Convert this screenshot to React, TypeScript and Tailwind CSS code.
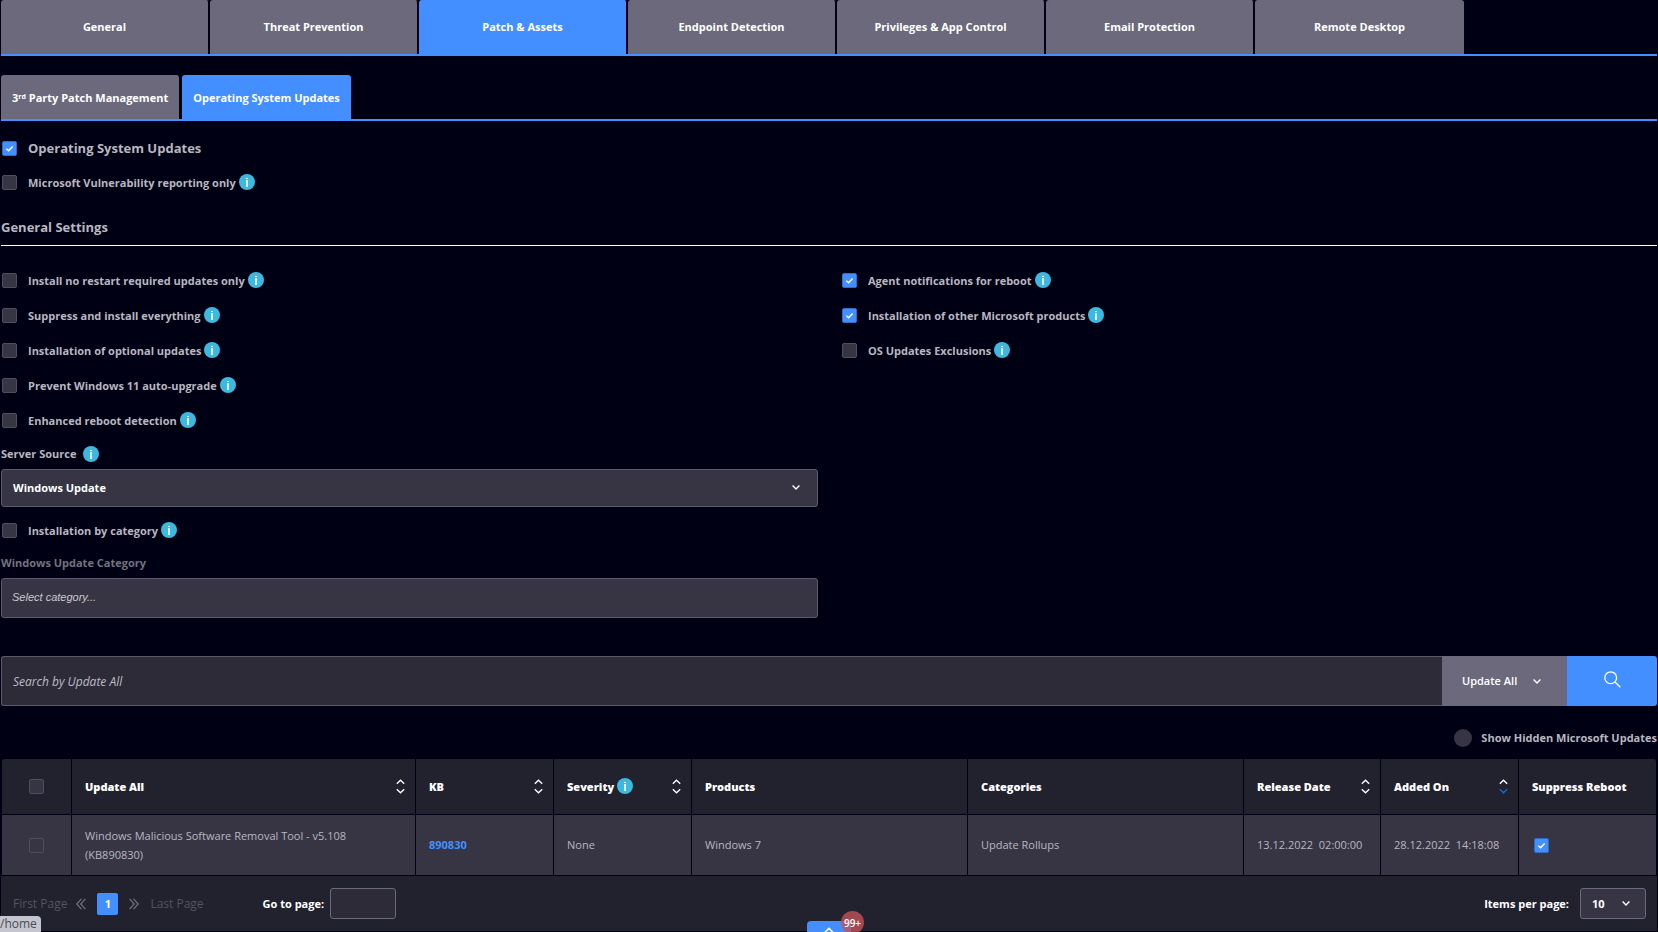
import React from 'react';
import clsx from 'clsx';

const InfoIcon = () => (
  <svg viewBox="0 0 16 16" className="mb-px h-4 w-4 shrink-0" aria-hidden="true">
    <circle cx="8" cy="8" r="8" fill="#3db8e0" />
    <rect x="7" y="4" width="2" height="1" fill="#fff" />
    <rect x="7" y="6" width="2" height="7" fill="#d6f0f9" />
  </svg>
);

const Chevron = ({ className }: { className?: string }) => (
  <svg viewBox="0 0 8 5" className={clsx('h-[5px] w-2', className)} fill="none" stroke="#fff" strokeWidth="1.4" aria-hidden="true">
    <path d="M0.6 0.6 L4 4 L7.4 0.6" />
  </svg>
);

const SortButton = ({ label, desc }: { label: string; desc?: boolean }) => (
  <button type="button" aria-label={`Sort by ${label}`}>
    <svg viewBox="0 0 9 15" className="h-[15px] w-[9px]" fill="none" strokeWidth="1.3">
      <path d="M0.8 4.8 L4.5 1.2 L8.2 4.8" stroke="#fff" />
      <path d="M0.8 10.2 L4.5 13.8 L8.2 10.2" stroke={desc ? '#0f6de0' : '#fff'} />
    </svg>
  </button>
);

interface CheckProps {
  id: string;
  checked?: boolean;
  label?: string;
}

const Check: React.FC<CheckProps> = ({ id, checked, label }) => (
  <span className="relative inline-flex shrink-0">
    <input
      id={id}
      type="checkbox"
      defaultChecked={checked}
      aria-label={label}
      className="peer h-[15px] w-[15px] appearance-none rounded-[2px] border border-[#504e5e] bg-[#373544] checked:border-[#2f6cc4] checked:bg-[#448fff]"
    />
    <svg viewBox="0 0 15 15" className="pointer-events-none absolute inset-0 hidden h-[15px] w-[15px] peer-checked:block" fill="none" stroke="#fff" strokeWidth="1.5">
      <path d="M4.4 7.8 L6.6 9.8 L10.6 5.4" />
    </svg>
  </span>
);

interface OptionProps extends CheckProps {
  text: string;
}

const Option: React.FC<OptionProps> = ({ id, text, checked }) => (
  <div className="flex h-[35px] items-center pl-px">
    <Check id={id} checked={checked} />
    <label htmlFor={id} className="mr-[3px] pl-[11px]">{text}</label>
    <InfoIcon />
  </div>
);

const tabs = [
  'General',
  'Threat Prevention',
  'Patch & Assets',
  'Endpoint Detection',
  'Privileges & App Control',
  'Email Protection',
  'Remote Desktop',
];

const columns = [
  { name: 'Update All', sort: true },
  { name: 'KB', sort: true },
  { name: 'Severity', sort: true, info: true },
  { name: 'Products' },
  { name: 'Categories' },
  { name: 'Release Date', sort: true },
  { name: 'Added On', sort: true, desc: true },
  { name: 'Suppress Reboot' },
];

const UpdatesTable = () => (
  <table className="w-full table-fixed border-separate border-spacing-px text-left">
    <colgroup>
      <col className="w-[69px]" />
      <col />
      <col className="w-[137px]" />
      <col className="w-[137px]" />
      <col className="w-[275px]" />
      <col className="w-[275px]" />
      <col className="w-[136px]" />
      <col className="w-[137px]" />
      <col className="w-[137px]" />
    </colgroup>
    <thead>
      <tr className="h-[55px] text-white">
        <th className="rounded-tl-[3px] bg-[#22212e] text-center">
          <span className="flex justify-center"><Check id="all" label="Select all updates" /></span>
        </th>
        {columns.map((col) => (
          <th key={col.name} className="bg-[#22212e] pr-[10px] pl-[13px] font-extrabold last:rounded-tr-[3px]">
            <div className="flex items-center gap-[3px]">
              <span className="whitespace-nowrap">{col.name}</span>
              {col.info && <InfoIcon />}
              {col.sort && (
                <span className="ml-auto flex">
                  <SortButton label={col.name} desc={col.desc} />
                </span>
              )}
            </div>
          </th>
        ))}
      </tr>
    </thead>
    <tbody>
      <tr className="h-[60px] font-medium [&>td]:bg-[#373544] [&>td]:pl-[13px]">
        <td className="!pl-0">
          <span className="flex justify-center"><Check id="row-890830" label="Select KB890830" /></span>
        </td>
        <td className="pr-10 leading-[19px]">Windows Malicious Software Removal Tool - v5.108 (KB890830)</td>
        <td><a href="#890830" className="font-bold text-[#448fff]">890830</a></td>
        <td>None</td>
        <td>Windows 7</td>
        <td>Update Rollups</td>
        <td className="whitespace-pre">{'13.12.2022  02:00:00'}</td>
        <td className="whitespace-pre">{'28.12.2022  14:18:08'}</td>
        <td>
          <span className="flex pl-[2px]"><Check id="suppress-890830" label="Suppress reboot" checked /></span>
        </td>
      </tr>
    </tbody>
  </table>
);

const DoubleChevron = ({ className }: { className?: string }) => (
  <svg viewBox="0 0 10 12" className={clsx('h-3 w-[10px]', className)} fill="none" stroke="#74727f" strokeWidth="1.2" aria-hidden="true">
    <path d="M5.4 0.8 L0.8 6 L5.4 11.2 M9.4 0.8 L4.8 6 L9.4 11.2" />
  </svg>
);

const Pagination = () => (
  <div className="flex h-[55px] items-center bg-[#22212e] pr-[11px] pl-3 text-[#55535f]">
    <button type="button" className="text-[12px] font-normal">First Page</button>
    <button type="button" aria-label="Previous page" className="ml-[9px]"><DoubleChevron /></button>
    <button type="button" className="mx-[11px] h-[22px] w-[21px] rounded-[2px] bg-[#448fff] font-bold text-white">1</button>
    <button type="button" aria-label="Next page"><DoubleChevron className="rotate-180" /></button>
    <button type="button" className="ml-[11px] text-[12px] font-normal">Last Page</button>
    <label htmlFor="page" className="ml-[59px] font-bold text-white">Go to page:</label>
    <input id="page" type="text" className="ml-[6px] h-[31px] w-[66px] rounded-[3px] border border-[#6b697b] bg-[#2d2b38] px-2 text-white outline-none" />
    <label htmlFor="per-page" className="ml-auto font-bold text-white">Items per page:</label>
    <div className="relative ml-[11px]">
      <select id="per-page" className="h-[31px] w-[66px] appearance-none rounded-[3px] border border-[#6b697b] bg-[#373544] pl-[11px] font-bold text-white outline-none">
        <option>10</option>
        <option>25</option>
      </select>
      <Chevron className="pointer-events-none absolute top-[13px] right-4" />
    </div>
  </div>
);

export default function App() {
  return (
    <div className="relative min-h-screen overflow-hidden bg-[#000014] px-px font-['Open_Sans',sans-serif] text-[11px] leading-4 font-bold text-[#b8b7c0]">
      <nav className="flex border-b-2 border-[#448fff]">
        {tabs.map((tab) => (
          <button
            key={tab}
            type="button"
            className={clsx(
              'h-[54px] w-[209px] rounded-t-[3px] border-r-2 border-[#000014] text-white last:border-r-0',
              tab === 'Patch & Assets' ? 'bg-[#448fff]' : 'bg-[#6b697b]',
            )}
          >
            {tab}
          </button>
        ))}
      </nav>

      <nav className="mt-[19px] flex gap-[3px] border-b-2 border-[#448fff] text-white">
        <button type="button" className="h-11 rounded-t-[3px] bg-[#6b697b] px-[11px] pt-px">
          3<sup className="-top-[3px] text-[7px] leading-none">rd</sup> Party Patch Management
        </button>
        <button type="button" className="h-11 rounded-t-[3px] bg-[#448fff] px-[11px] pt-px">Operating System Updates</button>
      </nav>

      <div className="mt-[11px] flex h-[33px] items-center pl-px">
        <Check id="os-updates" checked />
        <label htmlFor="os-updates" className="pb-px pl-[11px] text-[13px]">Operating System Updates</label>
      </div>
      <div className="flex h-[35px] items-center">
        <Option id="ms-only" text="Microsoft Vulnerability reporting only" />
      </div>

      <h2 className="mt-[11px] h-[35px] border-b border-white text-[13px] leading-[32px]">General Settings</h2>

      <div className="mt-[17px] grid grid-cols-2 gap-x-[22px]">
        <div>
          <Option id="no-restart" text="Install no restart required updates only" />
          <Option id="suppress" text="Suppress and install everything" />
          <Option id="optional" text="Installation of optional updates" />
          <Option id="win11" text="Prevent Windows 11 auto-upgrade" />
          <Option id="enhanced" text="Enhanced reboot detection" />

          <div className="flex h-[31px] items-center gap-[7px] pt-px">
            <label htmlFor="source">Server Source</label>
            <InfoIcon />
          </div>
          <div className="relative">
            <select id="source" className="h-[38px] w-full appearance-none rounded-[3px] border border-[#5d5b6b] bg-[#373544] px-[11px] text-white outline-none">
              <option>Windows Update</option>
              <option>WSUS</option>
            </select>
            <Chevron className="pointer-events-none absolute top-4 right-[18px]" />
          </div>

          <div className="mt-[6px]">
            <Option id="by-category" text="Installation by category" />
          </div>
          <label htmlFor="category" className="flex h-[30px] items-center text-[#74737d]">Windows Update Category</label>
          <input
            id="category"
            type="text"
            placeholder="Select category..."
            className="block h-10 w-full rounded-[3px] border border-[#5d5b6b] bg-[#373544] px-[10px] pb-[2px] font-['Liberation_Sans',sans-serif] font-normal italic outline-none placeholder:text-[#c9c8d0]"
          />
        </div>
        <div className="pl-px">
          <Option id="agent" text="Agent notifications for reboot" checked />
          <Option id="other-ms" text="Installation of other Microsoft products" checked />
          <Option id="exclusions" text="OS Updates Exclusions" />
        </div>
      </div>

      <form className="mt-[38px] flex h-[50px]" onSubmit={(e) => e.preventDefault()}>
        <input
          type="text"
          aria-label="Search by Update All"
          placeholder="Search by Update All"
          className="min-w-0 flex-1 rounded-l-[3px] border border-r-0 border-[#5d5b6b] bg-[#2d2b38] px-[11px] pt-[2px] text-[12px] font-normal italic outline-none placeholder:text-[#bdbcc4]"
        />
        <div className="relative">
          <select aria-label="Search field" className="h-full w-[125px] appearance-none bg-[#6b697b] pl-5 font-semibold text-white outline-none">
            <option>Update All</option>
            <option>KB</option>
          </select>
          <Chevron className="pointer-events-none absolute top-[23px] right-[26px]" />
        </div>
        <button type="submit" aria-label="Search" className="flex w-[90px] items-center justify-center rounded-r-[3px] bg-[#448fff]">
          <svg viewBox="0 0 17 17" className="mb-[3px] h-[17px] w-[17px]" fill="none" stroke="#fff" strokeWidth="1.3">
            <circle cx="6.7" cy="6.7" r="5.9" />
            <path d="M11 11 L16.3 16.3" />
          </svg>
        </button>
      </form>

      <div className="flex h-[52px] items-center justify-end gap-[9px] pt-[11px]">
        <input id="hidden-updates" type="checkbox" className="h-[18px] w-[18px] appearance-none rounded-full bg-[#373544] checked:bg-[#448fff]" />
        <label htmlFor="hidden-updates">Show Hidden Microsoft Updates</label>
      </div>

      <UpdatesTable />
      <Pagination />

      {/* Scroll-up handle with the notification count */}
      <button type="button" aria-label="Open notifications" className="absolute bottom-0 left-[807px] flex h-[11px] w-11 justify-center rounded-t-[4px] bg-[#448fff]">
        <svg viewBox="0 0 10 6" className="mt-[6px] h-[6px] w-[10px]" fill="none" stroke="#fff" strokeWidth="1.5">
          <path d="M0.8 5.5 L5 1.4 L9.2 5.5" />
        </svg>
      </button>
      <span className="absolute -bottom-[2px] left-[841px] flex h-[23px] w-[23px] items-center justify-center rounded-full bg-[#c2525a]/80 text-[10px] font-semibold text-white">99+</span>
      <span className="absolute bottom-0 left-0 h-4 w-[41px] rounded-tr-[4px] bg-[#c4c5cf] text-[12px] leading-4 font-normal text-[#4b4c55]">/home</span>
    </div>
  );
}
